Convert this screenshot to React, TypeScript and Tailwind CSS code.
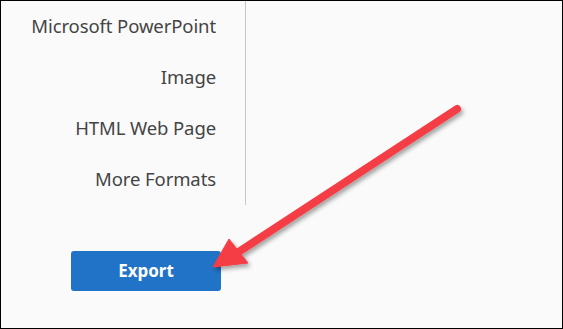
export default function App() {
  const formats = ["Microsoft PowerPoint", "Image", "HTML Web Page", "More Formats"]
  return (
    <div className="relative w-[563px] h-[329px] border border-black bg-[#fafafa] overflow-hidden" style={{ fontFamily: '"Noto Sans", "Open Sans", sans-serif' }}>
      <div className="w-[245px] h-[205px] border-r border-[#c8c8c8] pr-[29px] -mt-px">
        {formats.map((f) => (
          <div key={f} className="h-[51px] flex items-center justify-end text-[18.5px] tracking-[-0.1px] text-[#444444]">
            {f}
          </div>
        ))}
      </div>
      <button className="ml-[70px] mt-[46px] w-[150px] h-[40px] rounded-[3px] bg-[#2173c7] text-white text-[17px] font-bold">
        Export
      </button>
      <svg className="absolute left-0 top-0" width="563" height="329" viewBox="-1 -1 563 329">
        <defs>
          <filter id="sh" x="-20%" y="-20%" width="140%" height="140%">
            <feDropShadow dx="2" dy="3" stdDeviation="2" floodColor="#000" floodOpacity="0.35" />
          </filter>
        </defs>
        <g filter="url(#sh)" fill="#f53e45" stroke="#f53e45">
          <line x1="455" y1="107" x2="235" y2="251" strokeWidth="8" strokeLinecap="round" />
          <polygon points="211,265 227,237 246,261" strokeWidth="1" strokeLinejoin="round" />
        </g>
      </svg>
    </div>
  )
}
